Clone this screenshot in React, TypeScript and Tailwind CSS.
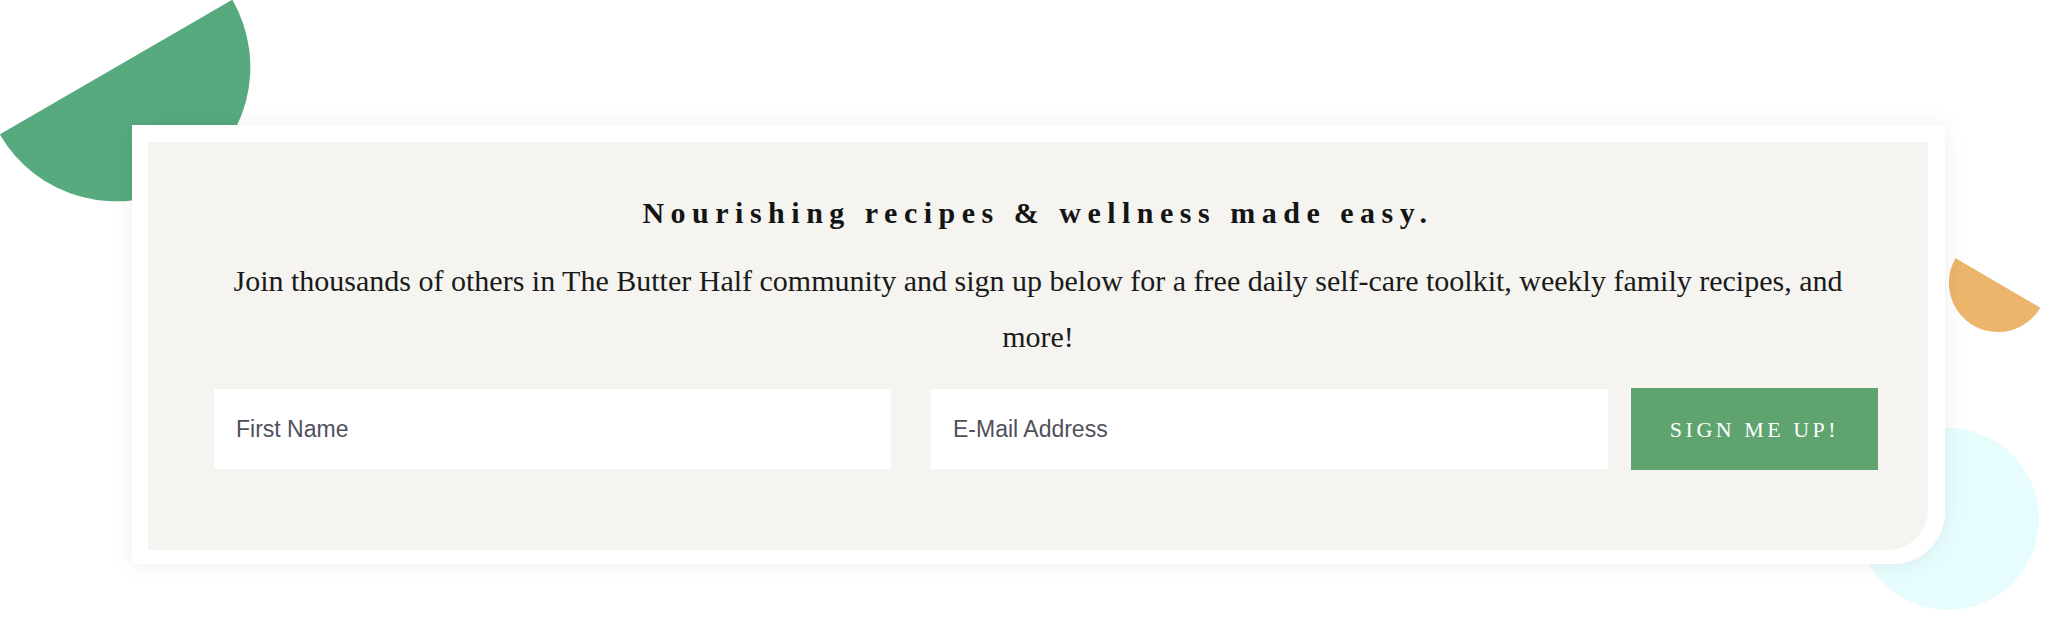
import React from "react";

const serif = "font-['Liberation_Serif','Times_New_Roman',serif]";

const Shapes = () => (
  <svg
    className="pointer-events-none absolute inset-0"
    width={2048}
    height={627}
    viewBox="0 0 2048 627"
  >
    <path d="M -0.3 134.3 A 134 134 0 0 0 232.3 -0.3 Z" fill="#57aa7e" />
    <path d="M 1955.6 258.3 A 49 49 0 0 0 2040.4 307.7 Z" fill="#ecb56c" />
    <circle cx={1948} cy={519} r={91} fill="#e7fcfc" />
  </svg>
);

const SignupForm = () => {
  return (
    <div className="flex items-center pl-[66px]">
      <input
        type="text"
        placeholder="First Name"
        className="h-[80px] w-[677px] bg-white pl-[22px] font-['Liberation_Sans',Arial,sans-serif] text-[23px] text-[#4a4a55] outline-none placeholder:text-[#50505c]"
      />
      <input
        type="email"
        placeholder="E-Mail Address"
        className="ml-[40px] h-[80px] w-[677px] bg-white pl-[22px] font-['Liberation_Sans',Arial,sans-serif] text-[23px] text-[#4a4a55] outline-none placeholder:text-[#50505c]"
      />
      <button
        className={`ml-[23px] h-[82px] w-[247px] bg-[#5fa46f] text-[22px] uppercase tracking-[3.5px] text-white ${serif}`}
      >
        Sign me up!
      </button>
    </div>
  );
};

export default function App() {
  return (
    <div className="relative h-[627px] w-[2048px] overflow-hidden bg-white">
      <Shapes />
      <div className="relative z-10 ml-[132px] mt-[125px] h-[439px] w-[1813px] rounded-br-[52px] bg-white pt-[17px] pl-[16px] pr-[17px] pb-[14px] shadow-[0_0_22px_rgba(0,0,0,0.07)]">
        <div className="h-full rounded-br-[40px] bg-[#f5f4f0] pt-[51px]">
          <h2
            className={`h-[40px] text-center text-[30px] font-bold leading-[40px] tracking-[6.5px] text-[#141414] ${serif}`}
          >
            Nourishing recipes &amp; wellness made easy.
          </h2>
          <p
            className={`mx-auto mt-[20px] w-[1660px] text-center text-[30px] leading-[56px] text-[#1a1a1a] ${serif}`}
          >
            Join thousands of others in The Butter Half community and sign up below for a free daily self-care toolkit,
            weekly family recipes, and more!
          </p>
          <div className="mt-[23px]">
            <SignupForm />
          </div>
        </div>
      </div>
    </div>
  );
}
